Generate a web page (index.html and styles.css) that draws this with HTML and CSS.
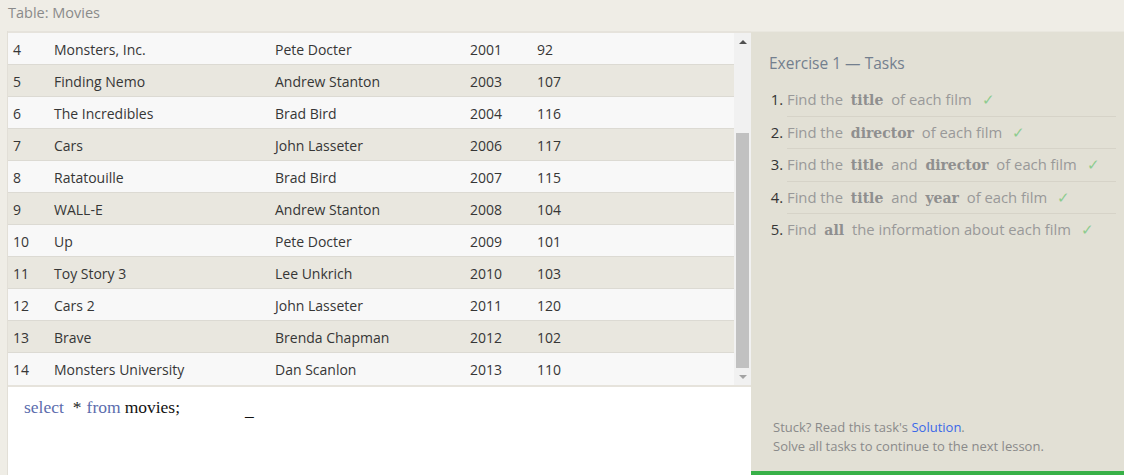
FILE: index.html
```html
<!DOCTYPE html>
<html>
<head>
<meta charset="utf-8">
<link rel="stylesheet" href="styles.css">
</head>
<body>
<div class="header">Table: Movies</div>
<div class="main">
  <div class="left">
    <div class="table-wrap">
      <div class="rows">
        <div class="row"><span class="c-id">4</span><span class="c-title">Monsters, Inc.</span><span class="c-dir">Pete Docter</span><span class="c-year">2001</span><span class="c-len">92</span></div>
        <div class="row"><span class="c-id">5</span><span class="c-title">Finding Nemo</span><span class="c-dir">Andrew Stanton</span><span class="c-year">2003</span><span class="c-len">107</span></div>
        <div class="row"><span class="c-id">6</span><span class="c-title">The Incredibles</span><span class="c-dir">Brad Bird</span><span class="c-year">2004</span><span class="c-len">116</span></div>
        <div class="row"><span class="c-id">7</span><span class="c-title">Cars</span><span class="c-dir">John Lasseter</span><span class="c-year">2006</span><span class="c-len">117</span></div>
        <div class="row"><span class="c-id">8</span><span class="c-title">Ratatouille</span><span class="c-dir">Brad Bird</span><span class="c-year">2007</span><span class="c-len">115</span></div>
        <div class="row"><span class="c-id">9</span><span class="c-title">WALL-E</span><span class="c-dir">Andrew Stanton</span><span class="c-year">2008</span><span class="c-len">104</span></div>
        <div class="row"><span class="c-id">10</span><span class="c-title">Up</span><span class="c-dir">Pete Docter</span><span class="c-year">2009</span><span class="c-len">101</span></div>
        <div class="row"><span class="c-id">11</span><span class="c-title">Toy Story 3</span><span class="c-dir">Lee Unkrich</span><span class="c-year">2010</span><span class="c-len">103</span></div>
        <div class="row"><span class="c-id">12</span><span class="c-title">Cars 2</span><span class="c-dir">John Lasseter</span><span class="c-year">2011</span><span class="c-len">120</span></div>
        <div class="row"><span class="c-id">13</span><span class="c-title">Brave</span><span class="c-dir">Brenda Chapman</span><span class="c-year">2012</span><span class="c-len">102</span></div>
        <div class="row"><span class="c-id">14</span><span class="c-title">Monsters University</span><span class="c-dir">Dan Scanlon</span><span class="c-year">2013</span><span class="c-len">110</span></div>
      </div>
      <div class="scrollbar">
        <div class="arrow up"></div>
        <div class="track"><div class="thumb"></div></div>
        <div class="arrow down"></div>
      </div>
    </div>
    <div class="editor">
      <span class="kw">select</span><span class="star">*</span><span class="kw">from</span><span class="ident">movies;</span><span class="cursor">_</span>
    </div>
  </div>
  <div class="panel">
    <div class="tasks">
      <h2 class="title">Exercise 1 — Tasks</h2>
      <ol class="list">
        <li><span class="txt">Find the <b>title</b> of each film</span><span class="check">✓</span></li>
        <li><span class="txt">Find the <b>director</b> of each film</span><span class="check">✓</span></li>
        <li><span class="txt">Find the <b>title</b> and <b>director</b> of each film</span><span class="check">✓</span></li>
        <li><span class="txt">Find the <b>title</b> and <b>year</b> of each film</span><span class="check">✓</span></li>
        <li><span class="txt">Find <b>all</b> the information about each film</span><span class="check">✓</span></li>
      </ol>
    </div>
    <div class="footer">
      <div>Stuck? Read this task's <a class="link">Solution</a>.</div>
      <div>Solve all tasks to continue to the next lesson.</div>
    </div>
    <div class="progress"></div>
  </div>
</div>
</body>
</html>
```

FILE: styles.css
```css
html, body {
  margin: 0;
  padding: 0;
}
body {
  width: 1124px;
  height: 475px;
  overflow: hidden;
  background: #efede6;
  font-family: "Open Sans", "Noto Sans", sans-serif;
  color: #333;
}
.header {
  height: 31px;
  box-sizing: border-box;
  padding: 3px 0 0 8px;
  font-size: 14.5px;
  line-height: 20px;
  color: #8a8a8a;
}
.main {
  display: flex;
  height: 444px;
}
.left {
  width: 744px;
  margin-left: 7px;
  display: flex;
  flex-direction: column;
  border-left: 1px solid #e2dfd7;
  box-sizing: border-box;
}
.table-wrap {
  display: flex;
  border-top: 2px solid #e6e3dc;
  border-bottom: 2px solid #e6e3dc;
}
.rows {
  flex: 1;
}
.row {
  display: flex;
  align-items: center;
  height: 31px;
  padding-top: 1px;
  box-sizing: content-box;
  border-bottom: 1px solid #dcdad3;
  font-size: 14px;
  color: #363636;
  background: #f8f8f8;
}
.row:nth-child(even) {
  background: #e9e7df;
}
.row:last-child {
  border-bottom: none;
  height: 31px;
}
.rows .row {
  height: 30px;
}
.rows .row:last-child {
  height: 31px;
}
.c-id { width: 46px; padding-left: 5px; box-sizing: border-box; }
.c-title { width: 221px; }
.c-dir { width: 195px; }
.c-year { width: 67px; }
.c-len { width: 60px; }
.scrollbar {
  width: 17px;
  background: #f1f1f1;
  display: flex;
  flex-direction: column;
}
.arrow {
  height: 17px;
  display: flex;
  align-items: center;
  justify-content: center;
}
.arrow.up::before {
  content: "";
  border-left: 4px solid transparent;
  border-right: 4px solid transparent;
  border-bottom: 4px solid #505050;
}
.arrow.down::before {
  content: "";
  border-left: 4px solid transparent;
  border-right: 4px solid transparent;
  border-top: 4px solid #a3a3a3;
}
.track {
  flex: 1;
  display: flex;
  flex-direction: column;
  justify-content: flex-end;
  padding: 0 2px;
}
.thumb {
  height: 235px;
  background: #c1c1c1;
}
.editor {
  flex: 1;
  background: #ffffff;
  padding: 10px 0 0 16px;
  font-family: "Liberation Serif", "DejaVu Serif", serif;
  font-size: 17.5px;
  line-height: 20px;
  color: #111;
  display: flex;
  align-items: flex-start;
}
.kw { color: #5b6cad; }
.star { color: #222; margin: 0 5px 0 9px; }
.ident { color: #111; margin-left: 4px; }
.cursor {
  margin-left: 65px;
  position: relative;
  top: 3px;
}
.panel {
  flex: 1;
  background: #e2e0d5;
  display: flex;
  flex-direction: column;
  border-top: 1px solid #e9e7df;
}
.tasks {
  flex: 1;
  padding: 20px 0 0 18px;
}
.title {
  margin: 0 0 10px 0;
  font-weight: normal;
  font-size: 15.5px;
  line-height: 22px;
  color: #737f8e;
}
.list {
  margin: 0;
  padding: 0 0 0 18px;
  width: 329px;
}
.list li {
  height: 31.5px;
  border-bottom: 1px solid #d6d3c8;
  font-size: 14.8px;
  color: #999;
  list-style-position: outside;
  line-height: 31px;
}
.list li::marker {
  color: #333;
}
.list li:last-child {
  border-bottom: none;
}
.list b {
  font-family: "DejaVu Serif", "Liberation Serif", serif;
  font-weight: bold;
  color: #8f8f8f;
  margin: 0 4px;
  font-size: 14px;
}
.check {
  color: #8dcc8f;
  margin-left: 10px;
}
.footer {
  padding: 0 0 15px 22px;
  font-size: 13px;
  line-height: 19px;
  color: #8a8a8a;
}
.link {
  color: #3a68e8;
}
.progress {
  height: 4px;
  background: #38b048;
}
```
